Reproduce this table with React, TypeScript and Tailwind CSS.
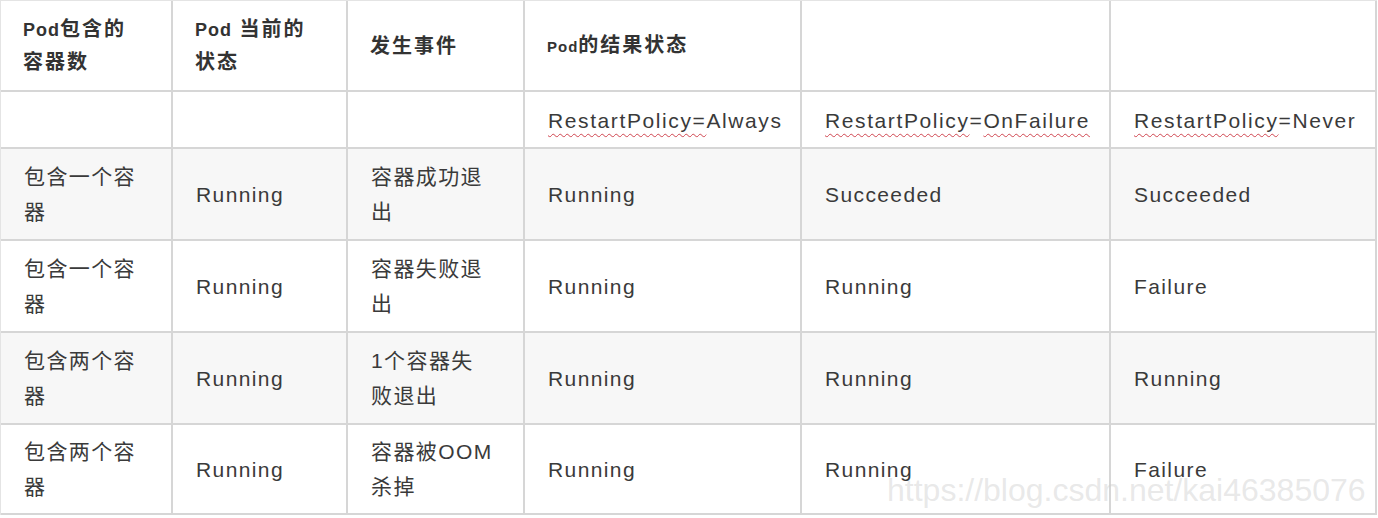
import React from "react";

const FONT = '"Liberation Sans", Arial, "Noto Sans CJK SC", sans-serif';

type Cell = React.ReactNode;

const Wavy = ({ children }: { children: React.ReactNode }) => (
  <span className="underline decoration-wavy decoration-[#d0454f] decoration-1 underline-offset-[5px]">
    {children}
  </span>
);

const PodB = ({ small }: { small?: boolean }) => (
  <span className={small ? "text-[15px] tracking-[1px]" : "text-[18px] tracking-[1px]"}>Pod</span>
);

const header: Cell[] = [
  <>
    <div><PodB />包含的</div>
    <div>容器数</div>
  </>,
  <>
    <div><PodB /> 当前的</div>
    <div>状态</div>
  </>,
  <div>发生事件</div>,
  <div><PodB small />的结果状态</div>,
  null,
  null,
];

const policyRow: Cell[] = [
  null,
  null,
  null,
  <div><Wavy>RestartPolicy=</Wavy>Always</div>,
  <div><Wavy>RestartPolicy</Wavy>=<Wavy>OnFailure</Wavy></div>,
  <div><Wavy>RestartPolicy</Wavy>=Never</div>,
];

const lines = (a: string, b?: string) => (
  <>
    <div>{a}</div>
    {b ? <div>{b}</div> : null}
  </>
);

const data: Cell[][] = [
  [lines("包含一个容", "器"), lines("Running"), lines("容器成功退", "出"), lines("Running"), lines("Succeeded"), lines("Succeeded")],
  [lines("包含一个容", "器"), lines("Running"), lines("容器失败退", "出"), lines("Running"), lines("Running"), lines("Failure")],
  [lines("包含两个容", "器"), lines("Running"), lines("1个容器失", "败退出"), lines("Running"), lines("Running"), lines("Running")],
  [lines("包含两个容", "器"), lines("Running"), lines("容器被OOM", "杀掉"), lines("Running"), lines("Running"), lines("Failure")],
];

export default function App() {
  return (
    <div className="relative w-[1378px] h-[518px] bg-white overflow-hidden" style={{ fontFamily: FONT }}>
      <div className="grid grid-cols-[172px_175px_177px_277px_309px_266px] grid-rows-[91px_57px_92px_92px_92px_90px] border-l border-t border-[#e4e4e4] w-[1377px]">
        {header.map((c, i) => (
          <div
            key={"h" + i}
            className="flex flex-col justify-center pl-[22px] border-r-2 border-b-2 border-[#d6d6d6] bg-white text-[#333] font-bold text-[20px] leading-[32px] tracking-[2px] whitespace-nowrap"
          >
            {c}
          </div>
        ))}
        {policyRow.map((c, i) => (
          <div
            key={"p" + i}
            className="flex flex-col justify-center pl-[23px] pt-[2px] border-r-2 border-b-2 border-[#d6d6d6] bg-white text-[#3a3a3a] text-[21px] leading-[32px] tracking-[1.6px] whitespace-nowrap"
          >
            {c}
          </div>
        ))}
        {data.map((row, r) =>
          row.map((c, i) => (
            <div
              key={"d" + r + "-" + i}
              className={
                "flex flex-col justify-center pl-[23px] border-r-2 border-b-2 border-[#d6d6d6] text-[#3a3a3a] text-[21px] leading-[35px] tracking-[1.4px] whitespace-nowrap " +
                (r % 2 === 0 ? "bg-[#f7f7f7]" : "bg-white")
              }
            >
              {c}
            </div>
          ))
        )}
      </div>
      <div className="absolute left-[887px] top-[470px] text-[32px] leading-[40px] text-[rgba(205,205,205,0.45)] whitespace-nowrap pointer-events-none">
        https://blog.csdn.net/kai46385076
      </div>
    </div>
  );
}
